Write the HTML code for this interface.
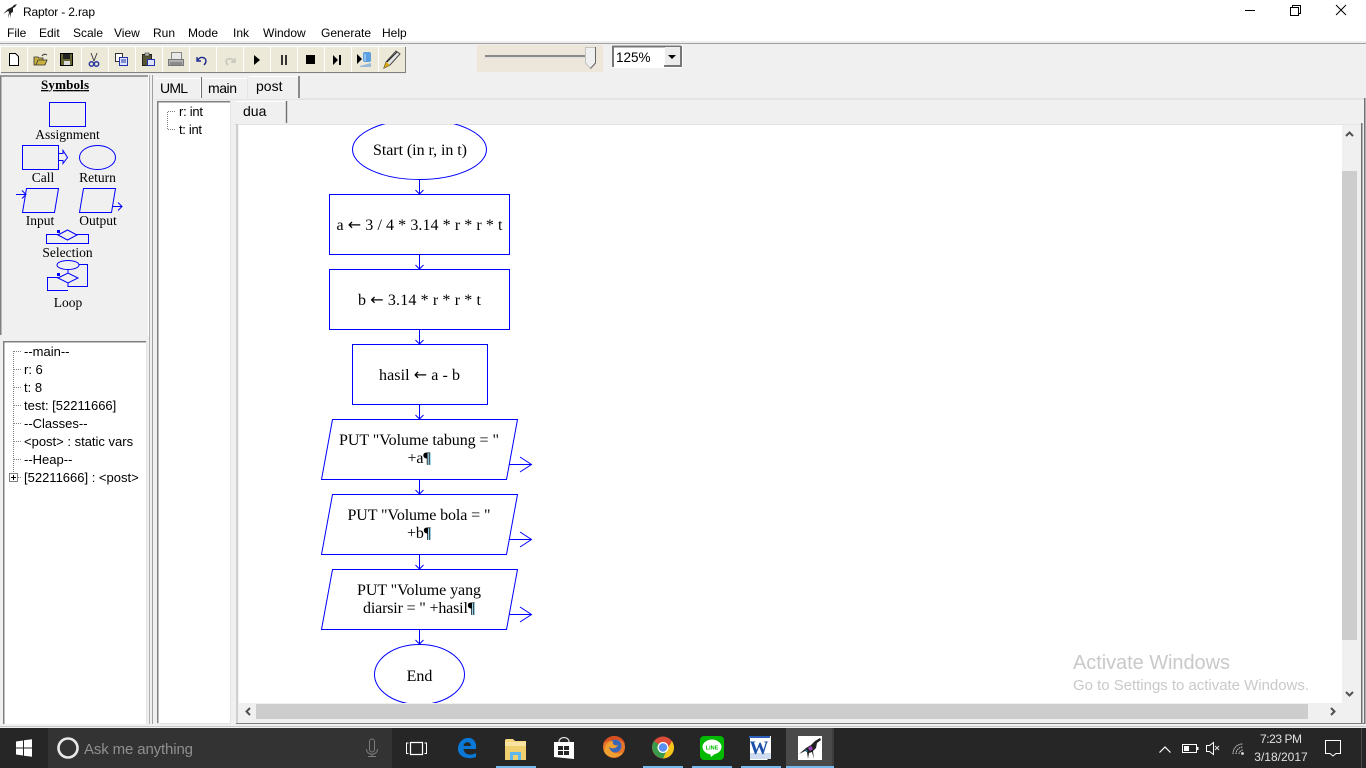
<!DOCTYPE html>
<html><head><meta charset="utf-8"><title>Raptor - 2.rap</title>
<style>
html,body{margin:0;padding:0;background:#f0f0f0;overflow:hidden}
svg{display:block}
text{white-space:pre}
.ui{font-family:"Liberation Sans",sans-serif;font-size:12px;fill:#000}
.t{font-family:"Liberation Sans",sans-serif;font-size:13px;fill:#000}
.m{font-family:"Liberation Sans",sans-serif;font-size:12px;fill:#000}
.s{font-family:"Liberation Serif",serif;font-size:13.5px;fill:#000;text-anchor:middle}
.f{font-family:"Liberation Serif",serif;font-size:16px;fill:#000;text-anchor:middle}
.ar{font-family:"DejaVu Sans",sans-serif;font-size:16px}
.b{fill:none;stroke:#00f;stroke-width:1}
</style></head><body>
<svg width="1366" height="768" viewBox="0 0 1366 768" xmlns="http://www.w3.org/2000/svg">
<defs>
<clipPath id="cv"><rect x="239" y="124" width="1103" height="579"/></clipPath>
<g id="btn"><rect x="0" y="0" width="26" height="25" fill="#ece9d8"/><path d="M0 25.5H26.5V0" fill="none" stroke="#808080"/><path d="M-.5 25V-.5H26" fill="none" stroke="#fff"/></g>
</defs>
<rect width="1366" height="768" fill="#f0f0f0"/>
<!-- title -->
<rect width="1366" height="42" fill="#fff"/>
<rect y="41" width="1366" height="2" fill="#eeeeee"/>
<rect y="43" width="1366" height="1" fill="#a0a0a0"/>
<path d="M3 14L8 9 12 7 14 5 17 4 15 7 13 8 13 12 11 13 11 18 10 13 8 18 9 12 8 11Z" fill="#222"/>
<text class="ui" x="23" y="16" textLength="72">Raptor - 2.rap</text>
<g class="m"><text class="m" x="7" y="37">File</text><text class="m" x="39" y="37">Edit</text><text class="m" x="73" y="37">Scale</text><text class="m" x="114" y="37">View</text><text class="m" x="153" y="37">Run</text><text class="m" x="188" y="37">Mode</text><text class="m" x="233" y="37">Ink</text><text class="m" x="263" y="37">Window</text><text class="m" x="321" y="37">Generate</text><text class="m" x="382" y="37">Help</text></g>
<path d="M1245 10.5H1255" stroke="#000"/>
<path d="M1290.5 7.5H1298.5V15.5H1290.5ZM1292.5 7V5.5H1300.5V13.5H1299" fill="none" stroke="#000"/>
<path d="M1336 5L1346 15M1346 5L1336 15" stroke="#000" fill="none"/>
<!-- toolbar -->
<rect x="1" y="45" width="405" height="29" fill="#e8e8e8"/>
<use href="#btn" x="1" y="47"/><use href="#btn" x="28" y="47"/><use href="#btn" x="55" y="47"/><use href="#btn" x="82" y="47"/><use href="#btn" x="109" y="47"/><use href="#btn" x="136" y="47"/><use href="#btn" x="163" y="47"/><use href="#btn" x="190" y="47"/><use href="#btn" x="217" y="47"/><use href="#btn" x="244" y="47"/><use href="#btn" x="271" y="47"/><use href="#btn" x="298" y="47"/><use href="#btn" x="325" y="47"/><use href="#btn" x="352" y="47"/><use href="#btn" x="379" y="47"/>
<path d="M9.5 53.5H15.5L18.5 56.5V65.5H9.5Z" fill="#fff" stroke="#000"/>
<path d="M34 65V57H38L39 58H43V60H38L36 65ZM36 65L38 60H47L45 65Z" fill="#c9b03e" stroke="#333" stroke-width=".8"/><path d="M42 56Q44 53 47 55" fill="none" stroke="#333"/>
<rect x="60.5" y="53.5" width="12" height="12" fill="#666633" stroke="#000"/><rect x="63" y="54" width="7" height="5" fill="#222"/><rect x="64" y="61" width="6" height="4" fill="#ddd"/>
<path d="M91 53L94 61M97 53L94 61" stroke="#444" fill="none"/><circle cx="91.5" cy="64" r="2.2" fill="none" stroke="#2b3aa0" stroke-width="1.5"/><circle cx="96.5" cy="64" r="2.2" fill="none" stroke="#2b3aa0" stroke-width="1.5"/>
<rect x="115.5" y="53.5" width="7" height="8" fill="#fff" stroke="#333"/><rect x="119.5" y="57.5" width="8" height="8" fill="#dfe3ff" stroke="#2233aa"/><path d="M121 60H126M121 62H126" stroke="#2233aa"/>
<path d="M142.5 54.5H151.5V65.5H142.5Z" fill="#555533" stroke="#222"/><rect x="145" y="53" width="4" height="3" fill="#bbb" stroke="#333" stroke-width=".6"/><rect x="147.5" y="59.5" width="7" height="6" fill="#dfe3ff" stroke="#2233aa"/>
<path d="M168.5 59.5H183.5V65.5H168.5Z" fill="#b0b0b0" stroke="#777"/><path d="M171.5 59V52.5H181.5V59" fill="#e8e8e8" stroke="#888"/><rect x="170" y="62" width="12" height="3" fill="#8a8a8a"/>
<path d="M197 57V61H201M198 60C200 56 206 57 206 61C206 63 205 64 204 65" fill="none" stroke="#1a2a90" stroke-width="1.4"/>
<path d="M235 58V62H231M234 61C232 58 227 58 226 61C226 63 227 64 228 65" fill="none" stroke="#c4c4bc" stroke-width="1.4"/>
<path d="M254 55V65L260 60Z" fill="#000"/>
<path d="M281 55H283V65H281ZM285 55H287V65H285Z" fill="#333"/>
<rect x="306" y="55" width="9" height="9" fill="#000"/>
<path d="M333 55V65L338 60ZM339 55H341V65H339Z" fill="#000"/>
<path d="M357 54V64L362 59Z" fill="#000"/><rect x="363" y="52" width="8" height="10" rx="2" fill="#5b9fe0"/><path d="M360 66L371 63V67H360Z" fill="#9ab8d8"/><path d="M365 61V54" stroke="#cfe4fa"/>
<path d="M384 68L386 62 396 51 400 54 390 65Z" fill="#e4e4e4" stroke="#444"/><path d="M384 68L386 62 390 65Z" fill="#d8a800"/><path d="M387 62L397 52" stroke="#222"/>
<!-- slider -->
<rect x="477" y="45" width="126" height="27" fill="#ede7db"/>
<rect x="485" y="55" width="102" height="2" fill="#8a8a8a"/><rect x="485" y="57" width="102" height="1" fill="#ddd"/>
<path d="M585.5 47.5H595.5V63L590.5 68.5 585.5 63Z" fill="#f0f0f0" stroke="#c4c4c4"/><path d="M595.5 47V63L590.5 68.5" fill="none" stroke="#666"/>
<!-- combo -->
<rect x="612" y="45" width="71" height="23" fill="#fff"/>
<path d="M613 67V46.5H681" fill="none" stroke="#777" stroke-width="2"/><path d="M681 46V66H664" fill="none" stroke="#777" stroke-width="2"/>
<rect x="665" y="47" width="15" height="18" fill="#ececec"/><path d="M668 55H676L672 59Z" fill="#000"/>
<text class="ui" x="616" y="62" style="font-size:13.5px">125%</text>
<!-- symbols panel -->
<rect y="75" width="150" height="652" fill="#f0f0f0"/>
<path d="M.75 335V76H148" fill="none" stroke="#808080" stroke-width="1.5"/>
<rect x="148" y="75" width="1" height="261" fill="#fff"/>
<text class="s" x="65" y="89" font-weight="bold" text-decoration="underline" style="font-size:13px" textLength="48">Symbols</text>
<rect class="b" x="49.5" y="102.5" width="36" height="24"/>
<text class="s" x="67.5" y="139">Assignment</text>
<rect class="b" x="22.5" y="145.5" width="36" height="24"/>
<path class="b" d="M59 153.5H63V150.5L67.5 157.5 63 163.5V160.5H59"/>
<text class="s" x="43" y="182">Call</text>
<ellipse class="b" cx="97.5" cy="157.5" rx="18" ry="12"/>
<text class="s" x="97.5" y="182">Return</text>
<path class="b" d="M26.5 188.5H58.5L54.5 212.5H22.5ZM16 194.5H26M22 190.5L26 194.5 22 198.5"/>
<text class="s" x="40" y="225">Input</text>
<path class="b" d="M83.5 188.5H115.5L111.5 212.5H79.5ZM112 206.5H122M118 202.5L122 206.5 118 210.5"/>
<text class="s" x="98" y="225">Output</text>
<path class="b" d="M46.5 234.5H88.5V243.5H46.5Z"/>
<path d="M58 235L67.5 230 77 235 67.5 240Z" fill="#f0f0f0" stroke="#00f"/>
<rect x="57" y="230" width="3" height="3" fill="#00f"/>
<text class="s" x="67.5" y="257">Selection</text>
<ellipse class="b" cx="68" cy="265" rx="11" ry="4.5"/>
<path class="b" d="M79 264.5H87.5V286.5H68V283M68 269.5V273M58 277.5H47.5V290.5H68"/>
<path class="b" d="M58 278L68 273 78 278 68 283Z"/>
<rect x="57" y="273" width="3" height="3" fill="#00f"/>
<text class="s" x="68" y="307">Loop</text>
<!-- watch panel -->
<rect x="3" y="341" width="143" height="385" fill="#fff"/>
<path d="M3.75 726V341.75H146" fill="none" stroke="#808080" stroke-width="1.5"/>
<path d="M146.5 341V726.5H3" fill="none" stroke="#e4e4e4"/>
<path d="M13.5 351V473" stroke="#808080" stroke-dasharray="1 1" fill="none"/>
<path d="M14 351.5H22M14 369.5H22M14 387.5H22M14 405.5H22M14 423.5H22M14 441.5H22M14 459.5H22M18 477.5H22" stroke="#808080" stroke-dasharray="1 1" fill="none"/>
<rect x="9.5" y="473.5" width="8" height="8" fill="#fff" stroke="#808080"/><path d="M11 477.5H16M13.5 475V480" stroke="#000"/>
<text class="t" x="24" y="356">--main--</text>
<text class="t" x="24" y="374">r: 6</text>
<text class="t" x="24" y="392">t: 8</text>
<text class="t" x="24" y="410">test: [52211666]</text>
<text class="t" x="24" y="428">--Classes--</text>
<text class="t" x="24" y="446">&lt;post&gt; : static vars</text>
<text class="t" x="24" y="464">--Heap--</text>
<text class="t" x="24" y="482">[52211666] : &lt;post&gt;</text>
<rect x="149" y="75" width="1" height="652" fill="#b0b0b0"/><rect x="152" y="75" width="1" height="652" fill="#a0a0a0"/>
<!-- tabs -->
<rect x="155" y="78" width="46" height="21" fill="#f0f0f0"/>
<path d="M155 78.5H200.5V98" fill="none" stroke="#fff"/><path d="M201.5 77V98" stroke="#707070"/>
<path d="M203 78.5H247" fill="none" stroke="#fff"/><path d="M247.5 79V98" stroke="#e4e4e4"/>
<path d="M249 76.5H298" fill="none" stroke="#fff"/><path d="M299 76V98" stroke="#707070" stroke-width="1.6"/>
<text class="ui" x="160" y="93" style="font-size:14px" textLength="28">UML</text>
<text class="ui" x="208" y="93" style="font-size:14px" textLength="29">main</text>
<text class="ui" x="256" y="91" style="font-size:14px">post</text>
<rect x="155" y="99" width="1094" height="1" fill="#e4e4e4"/><rect x="299" y="98" width="1066" height="2" fill="#e4e4e4"/>
<rect x="1364" y="98" width="1.5" height="627" fill="#707070"/>
<!-- tree -->
<rect x="157" y="101" width="73" height="622" fill="#fff"/>
<path d="M157.75 723V101.75H230" fill="none" stroke="#808080" stroke-width="1.5"/>
<path d="M230.5 101V723.5H157" fill="none" stroke="#e4e4e4"/>
<path d="M167.5 112V130M168 111.5H176M168 129.5H176" stroke="#808080" stroke-dasharray="1 1" fill="none"/>
<text class="t" x="179" y="116" textLength="24">r: int</text>
<text class="t" x="179" y="134" textLength="23">t: int</text>
<!-- inner tab -->
<path d="M236 101.5H285" stroke="#fff" fill="none"/>
<path d="M286.5 101V123" stroke="#707070" stroke-width="1.4"/>
<text class="ui" x="243" y="116" style="font-size:14px">dua</text>
<rect x="233" y="720" width="1131" height="3" fill="#f0f0f0"/>
<rect x="236" y="723" width="1128" height="1" fill="#808080"/>
<rect x="234" y="124" width="1130" height="1" fill="#e4e4e4"/>
<rect x="239" y="125" width="1103" height="578" fill="#fff"/>
<rect x="1361" y="123" width="1.5" height="600" fill="#707070"/>
<rect x="236" y="124" width="2" height="599" fill="#a0a0a0" opacity=".4"/>
<!-- scrollbars -->
<rect x="1342" y="125" width="15" height="578" fill="#f0f0f0"/>
<rect x="1342" y="171" width="15" height="469" fill="#cdcdcd"/>
<path d="M1346 136L1349.5 132.5 1353 136" fill="none" stroke="#505050" stroke-width="2"/>
<path d="M1346 692L1349.5 695.5 1353 692" fill="none" stroke="#505050" stroke-width="2"/>
<rect x="239" y="704" width="1103" height="15" fill="#f0f0f0"/>
<rect x="256" y="704" width="1052" height="15" fill="#cdcdcd"/>
<path d="M250 708L246.5 711.5 250 715" fill="none" stroke="#505050" stroke-width="2"/>
<path d="M1331 708L1334.5 711.5 1331 715" fill="none" stroke="#505050" stroke-width="2"/>
<!-- flowchart -->
<g clip-path="url(#cv)">
<ellipse class="b" cx="419.5" cy="149.5" rx="67" ry="30"/>
<ellipse class="b" cx="419.5" cy="674.5" rx="45" ry="30"/>
</g>
<path class="b" d="M329.5 194.5H509.5V254.5H329.5ZM329.5 269.5H509.5V329.5H329.5ZM352.5 344.5H487.5V404.5H352.5Z"/>
<path class="b" d="M332.5 419.5H517.5L506.5 479.5H321.5ZM332.5 494.5H517.5L506.5 554.5H321.5ZM332.5 569.5H517.5L506.5 629.5H321.5Z"/>
<path class="b" d="M509 464.5H531.5M520 457L531.5 464.5 520 472M509 539.5H531.5M520 532L531.5 539.5 520 547M509 614.5H531.5M520 607L531.5 614.5 520 622"/>
<path class="b" d="M419.5 180V194M415.5 190L419.5 194 423.5 190M419.5 255V269M415.5 265L419.5 269 423.5 265M419.5 330V344M415.5 340L419.5 344 423.5 340M419.5 405V419M415.5 415L419.5 419 423.5 415M419.5 480V494M415.5 490L419.5 494 423.5 490M419.5 555V569M415.5 565L419.5 569 423.5 565M419.5 630V644M415.5 640L419.5 644 423.5 640"/>
<text class="f" x="420" y="155" textLength="94">Start (in r, in t)</text>
<text class="f" x="419.5" y="230" textLength="166">a <tspan class="ar">←</tspan> 3 / 4 * 3.14 * r * r * t</text>
<text class="f" x="419.5" y="305" textLength="123">b <tspan class="ar">←</tspan> 3.14 * r * r * t</text>
<text class="f" x="419.5" y="380" textLength="81">hasil <tspan class="ar">←</tspan> a - b</text>
<text class="f" x="419" y="445" textLength="160">PUT "Volume tabung = "</text>
<rect x="427" y="453" width="4" height="12" fill="#a8dcf0"/>
<text class="f" x="419" y="463" textLength="23">+a¶</text>
<text class="f" x="419" y="520" textLength="143">PUT "Volume bola = "</text>
<rect x="427" y="528" width="4" height="12" fill="#a8dcf0"/>
<text class="f" x="419" y="538" textLength="24">+b¶</text>
<text class="f" x="419" y="595" textLength="124">PUT "Volume yang</text>
<rect x="471" y="603" width="4" height="12" fill="#a8dcf0"/>
<text class="f" x="419" y="613" textLength="112">diarsir = " +hasil¶</text>
<text class="f" x="419.5" y="681">End</text>
<!-- watermark -->
<text x="1073" y="669" textLength="157" style="font-family:'Liberation Sans',sans-serif;font-size:20px;fill:#c9c9c9">Activate Windows</text>
<text x="1073" y="690" textLength="236" style="font-family:'Liberation Sans',sans-serif;font-size:15px;fill:#c9c9c9">Go to Settings to activate Windows.</text>
<!-- taskbar -->
<rect y="724" width="1366" height="3" fill="#f0f0f0"/>
<rect y="726" width="1366" height="1" fill="#c8c8c8"/>
<rect y="728" width="1366" height="40" fill="#262626"/>
<rect x="48" y="728" width="344" height="40" fill="#333"/>
<path d="M16 741.5L23 740.5V747.5H16ZM24 740.3L32 739.2V747.5H24ZM16 748.5H23V755.5L16 754.5ZM24 748.5H32V756.8L24 755.7Z" fill="#fff"/>
<circle cx="68" cy="748" r="9.5" fill="none" stroke="#e8e8e8" stroke-width="2.6"/>
<text x="84" y="754" textLength="109" style="font-family:'Liberation Sans',sans-serif;font-size:15px;fill:#8f8f8f">Ask me anything</text>
<path d="M369.5 741.5a2.5 2.5 0 0 1 5 0v8a2.5 2.5 0 0 1-5 0ZM366.5 749c0 7 11 7 11 0M372 754V756M368 756.5H376" fill="none" stroke="#7c7c7c"/>
<path d="M410.5 742.5H422.5V754.5H410.5Z" fill="none" stroke="#fff" stroke-width="1.2"/><path d="M408.5 743H406.5V753.5H408.5M424.5 743H426.5V753.5H424.5" fill="none" stroke="#fff"/>
<!-- edge -->
<path d="M476 749H463.5C464 755 471 756 476 753V757C468 760 458 757 458 749C458 741 465 737 470 738C474 739 477 743 476 749ZM471 746C471 741 464 741 463.5 746Z" fill="#0a78d7" fill-rule="evenodd"/>
<!-- explorer -->
<path d="M505 740L506 739H513L515 741H526V760H505Z" fill="#f5d77e"/><rect x="505" y="742" width="21" height="4" fill="#f9e3a2"/><path d="M505 746H526V760H505Z" fill="#f0cf6e"/><path d="M510 760V752H521V760H518V755H513V760Z" fill="#5cb8ee"/><rect x="496" y="766" width="40" height="2" fill="#76b9ed"/>
<!-- store -->
<path d="M554 742H574V759L554 757Z" fill="#fff"/><path d="M559 742C559 736 569 736 569 742" fill="none" stroke="#ddd" stroke-width="1.2"/><path d="M558 746H563V750H558ZM564 746H569V750H564ZM558 751H563V755H558ZM564 751H569V755H564Z" fill="#262626"/>
<!-- firefox -->
<circle cx="614" cy="747" r="11" fill="#e8762a"/><circle cx="615" cy="746" r="6.5" fill="#3a66b8"/><path d="M604 751C606 758 618 760 623 752C619 755 611 754 609 747C612 749 616 749 618 745C614 746 612 744 613 741C608 741 605 745 604 751Z" fill="#f0a030"/><path d="M603 744C605 738 611 736 616 736C621 737 624 740 625 744C622 740 617 739 613 740C609 740 605 742 603 744Z" fill="#d84e20"/>
<!-- chrome -->
<circle cx="663" cy="747.5" r="11" fill="#dd4b39"/><path d="M663 747.5L654 741A11 11 0 0 0 658 757Z" fill="#3a9a4b"/><path d="M652.5 751L658 757A11 11 0 0 0 674 747.5H663Z" fill="#3a9a4b"/><path d="M663 758.5A11 11 0 0 0 674 747.5C674 745 673 743 672 741L667 750Z" fill="#f5c518"/><circle cx="663" cy="747.5" r="5.5" fill="#fff"/><circle cx="663" cy="747.5" r="4.2" fill="#5a8ef0"/>
<rect x="643" y="766" width="40" height="2" fill="#76b9ed"/>
<!-- line -->
<rect x="700" y="736" width="24" height="24" rx="4" fill="#00b900"/><ellipse cx="712" cy="747" rx="9.5" ry="7.5" fill="#fff"/><path d="M710 753L711 757 716 753Z" fill="#fff"/>
<text x="712" y="749.5" text-anchor="middle" style="font-family:'Liberation Sans',sans-serif;font-size:5.5px;font-weight:bold;fill:#00b900">LINE</text>
<rect x="692" y="766" width="40" height="2" fill="#76b9ed"/>
<!-- word -->
<path d="M750 736H771V756L767 760H750Z" fill="#fff"/><rect x="750" y="753" width="21" height="6" fill="#cfdcf0"/><rect x="749" y="736" width="21" height="2" fill="#2b5fb8"/>
<text x="759" y="754" text-anchor="middle" style="font-family:'Liberation Serif',serif;font-size:19px;font-weight:bold;fill:#1c4fa8">W</text>
<rect x="741" y="766" width="40" height="2" fill="#76b9ed"/>
<!-- raptor -->
<rect x="786" y="728" width="46" height="38" fill="#4a4a4a"/><rect x="832" y="728" width="2" height="38" fill="#3d3d3d"/><rect x="786" y="766" width="48" height="2" fill="#76b9ed"/>
<rect x="798" y="736" width="24" height="24" fill="#fff"/>
<path d="M799 754L806 748 811 745 815 741 820 738 821 740 817 743 816 748 813 751 814 759 812 752 809 753 808 759 807 752 805 751Z" fill="#222"/>
<path d="M808 748L811 746 813 749 810 751Z" fill="#a040c0"/><path d="M805 749L808 751 806 752Z" fill="#2090c0"/>
<!-- tray -->
<path d="M1159.5 752.5L1165 747 1170.5 752.5" fill="none" stroke="#fff" stroke-width="1.2"/>
<path d="M1182.5 744.5H1196.5V752.5H1182.5Z" fill="none" stroke="#fff"/><rect x="1184" y="746" width="5" height="5" fill="#fff"/><rect x="1197" y="747" width="1.5" height="3" fill="#fff"/>
<path d="M1206.5 745.5H1209.5L1213.5 742.5V754.5L1209.5 751.5H1206.5Z" fill="none" stroke="#fff"/><path d="M1215 746L1219 750M1219 746L1215 750" stroke="#ddd" fill="none"/>
<path d="M1233 754C1233 748 1237 744 1243 744M1236 754C1236 750 1239 747 1243 747M1239 754C1239 752 1241 750 1243 750" fill="none" stroke="#ccc" stroke-dasharray="1.5 .7"/><circle cx="1242.5" cy="753.5" r="1.4" fill="#ddd"/>
<text x="1281" y="743" text-anchor="middle" textLength="42" style="font-family:'Liberation Sans',sans-serif;font-size:12px;fill:#e0e0e0">7:23 PM</text>
<text x="1281" y="761" text-anchor="middle" style="font-family:'Liberation Sans',sans-serif;font-size:12px;fill:#e0e0e0">3/18/2017</text>
<path d="M1325.5 740.5H1340.5V753.5H1336L1333 756 1330 753.5H1325.5Z" fill="none" stroke="#fff"/>
<rect x="1361" y="728" width="1" height="40" fill="#4a4a4a"/>
</svg>
</body></html>
